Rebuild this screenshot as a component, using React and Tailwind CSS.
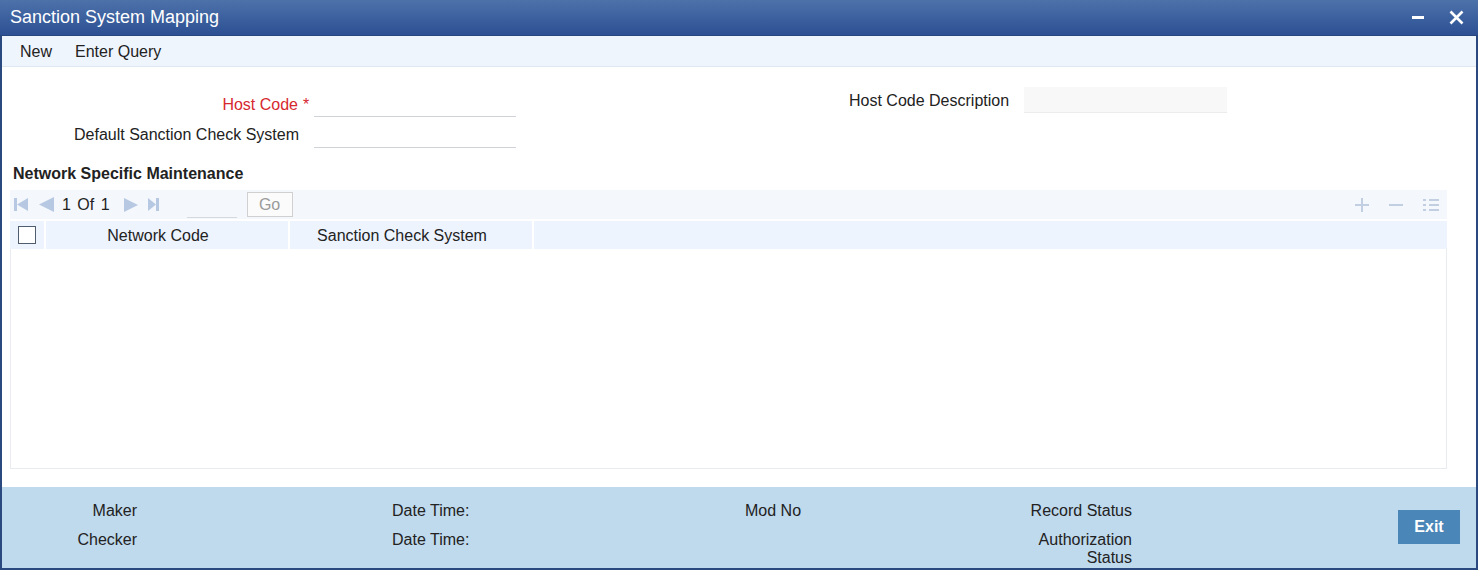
import React from 'react';

const iconColor = '#b6c8e2';

function PagerIcon({ kind }) {
  if (kind === 'first') {
    return (
      <svg width="15" height="13" viewBox="0 0 15 13">
        <rect x="0" y="0" width="3" height="13" fill={iconColor} />
        <polygon points="3,6.5 14,0 14,13" fill={iconColor} />
      </svg>
    );
  }
  if (kind === 'prev') {
    return (
      <svg width="15" height="15" viewBox="0 0 15 15">
        <polygon points="0,7.5 15,0 15,15" fill={iconColor} />
      </svg>
    );
  }
  if (kind === 'next') {
    return (
      <svg width="14" height="14" viewBox="0 0 14 14">
        <polygon points="14,7 0,0 0,14" fill={iconColor} />
      </svg>
    );
  }
  return (
    <svg width="11" height="13" viewBox="0 0 11 13">
      <polygon points="8,6.5 0,0 0,13" fill={iconColor} />
      <rect x="8" y="0" width="3" height="13" fill={iconColor} />
    </svg>
  );
}

export default function App() {
  return (
    <div className="w-[1480px] h-[574px] bg-white font-['Liberation_Sans',Arial,sans-serif] text-[16px] text-[#222]">
      <div className="w-[1478px] h-[570px] border-x-2 border-b-2 border-[#2a4a7f] flex flex-col">
        {/* title bar */}
        <div className="h-[36px] -mx-[2px] bg-linear-to-b from-[#4d72aa] to-[#2c5093] border-b border-[#27467f] flex items-center justify-between pl-[10px] pr-[14px]">
          <span className="text-white text-[18px] leading-[20px] -mt-[2px]">Sanction System Mapping</span>
          <div className="flex items-center gap-[25px]">
            <svg width="12" height="4" viewBox="0 0 12 4">
              <rect x="0" y="0" width="12" height="3" fill="#fff" />
            </svg>
            <svg width="15" height="15" viewBox="0 0 15 15">
              <path d="M1.5 1.5 L13.5 13.5 M13.5 1.5 L1.5 13.5" stroke="#fff" strokeWidth="2.6" />
            </svg>
          </div>
        </div>

        {/* toolbar */}
        <div className="h-[31px] bg-[#eff5fd] border-b border-[#dfe7f1] flex items-center pl-[18px] gap-[23px] leading-[18px] pt-[1px]">
          <span>New</span>
          <span>Enter Query</span>
        </div>

        {/* form */}
        <div className="flex">
          <div className="w-[514px] pt-[24px] flex flex-col gap-[5px]">
            <div className="flex items-end h-[26px]">
              <div className="w-[296px] text-right text-[#d7282f] leading-[18px] pb-[3px]">Host Code</div>
              <div className="w-[16px] pl-[5px] text-[#d7282f] leading-[18px] pb-[3px]">*</div>
              <div className="w-[202px] h-[26px] border-b border-[#cfd3d8]" />
            </div>
            <div className="flex items-end h-[26px]">
              <div className="w-[297px] text-right leading-[18px] pb-[4px]">Default Sanction Check System</div>
              <div className="w-[15px]" />
              <div className="w-[202px] h-[26px] border-b border-[#cfd3d8]" />
            </div>
          </div>
          <div className="pt-[20px] pl-[333px] flex items-center gap-[15px] self-start">
            <span className="leading-[18px] pt-[2px]">Host Code Description</span>
            <div className="w-[203px] h-[26px] bg-[#f8f8f8] border-b border-[#ececec]" />
          </div>
        </div>

        {/* grid section */}
        <div className="ml-[8px] w-[1437px] mt-[17px]">
          <div className="font-bold leading-[18px] ml-[3px]">Network Specific Maintenance</div>

          <div className="mt-[7px] h-[29px] bg-[#f4f8fd] flex items-center pl-[4px] pr-[8px]">
            <div className="flex items-center">
              <PagerIcon kind="first" />
              <span className="ml-[10px]"><PagerIcon kind="prev" /></span>
              <span className="ml-[8px] leading-[18px] [word-spacing:2px]">1 Of 1</span>
              <span className="ml-[14px]"><PagerIcon kind="next" /></span>
              <span className="ml-[10px]"><PagerIcon kind="last" /></span>
              <div className="ml-[28px] w-[50px] h-[22px] mt-[5px] border-b border-[#d5d9de]" />
              <div className="ml-[10px] w-[46px] h-[25px] border border-[#d0d0d0] bg-[#fbfbfb] text-[#9a9a9a] flex items-center justify-center leading-[18px]">Go</div>
            </div>
            <div className="ml-auto flex items-center gap-[20px]">
              <svg width="14" height="14" viewBox="0 0 14 14">
                <path d="M7 0 V14 M0 7 H14" stroke="#c2cfe2" strokeWidth="2" />
              </svg>
              <svg width="14" height="14" viewBox="0 0 14 14">
                <path d="M0 7 H14" stroke="#c2cfe2" strokeWidth="2" />
              </svg>
              <svg width="16" height="14" viewBox="0 0 16 14">
                <g fill="#c2cfe2">
                  <rect x="0" y="1" width="3" height="2" />
                  <rect x="6" y="1" width="10" height="2" />
                  <rect x="0" y="6" width="3" height="2" />
                  <rect x="6" y="6" width="10" height="2" />
                  <rect x="0" y="11" width="3" height="2" />
                  <rect x="6" y="11" width="10" height="2" />
                </g>
              </svg>
            </div>
          </div>

          <div className="mt-[2px] h-[28px] bg-[#edf4fe] flex">
            <div className="w-[34px] flex items-center justify-center">
              <div className="w-[18px] h-[18px] border-[1.5px] border-[#4f5d6e] bg-white" />
            </div>
            <div className="w-[2px] bg-white" />
            <div className="w-[242px] flex items-center justify-center pr-[18px] pt-[1px] leading-[18px]">Network Code</div>
            <div className="w-[2px] bg-white" />
            <div className="w-[242px] flex items-center justify-center pr-[18px] pt-[1px] leading-[18px]">Sanction Check System</div>
            <div className="w-[2px] bg-white" />
          </div>

          <div className="h-[220px] border-x border-b border-[#e8ebef] bg-white" />
        </div>

        {/* footer */}
        <div className="mt-auto h-[81px] bg-[#bfd9ed] flex leading-[18px]">
          <div className="w-[135px] pt-[15px] flex flex-col gap-[11px] text-right">
            <span>Maker</span>
            <span>Checker</span>
          </div>
          <div className="ml-[255px] w-[353px] pt-[15px] flex flex-col gap-[11px]">
            <span>Date Time:</span>
            <span>Date Time:</span>
          </div>
          <div className="w-[267px] pt-[15px]">
            <span>Mod No</span>
          </div>
          <div className="w-[120px] pt-[15px] flex flex-col gap-[11px] text-right">
            <span>Record Status</span>
            <span className="w-[110px] self-end">Authorization Status</span>
          </div>
          <div className="ml-[266px] mt-[23px] w-[62px] h-[34px] bg-[#4a86b7] text-white font-bold flex items-center justify-center">
            Exit
          </div>
        </div>
      </div>
    </div>
  );
}
